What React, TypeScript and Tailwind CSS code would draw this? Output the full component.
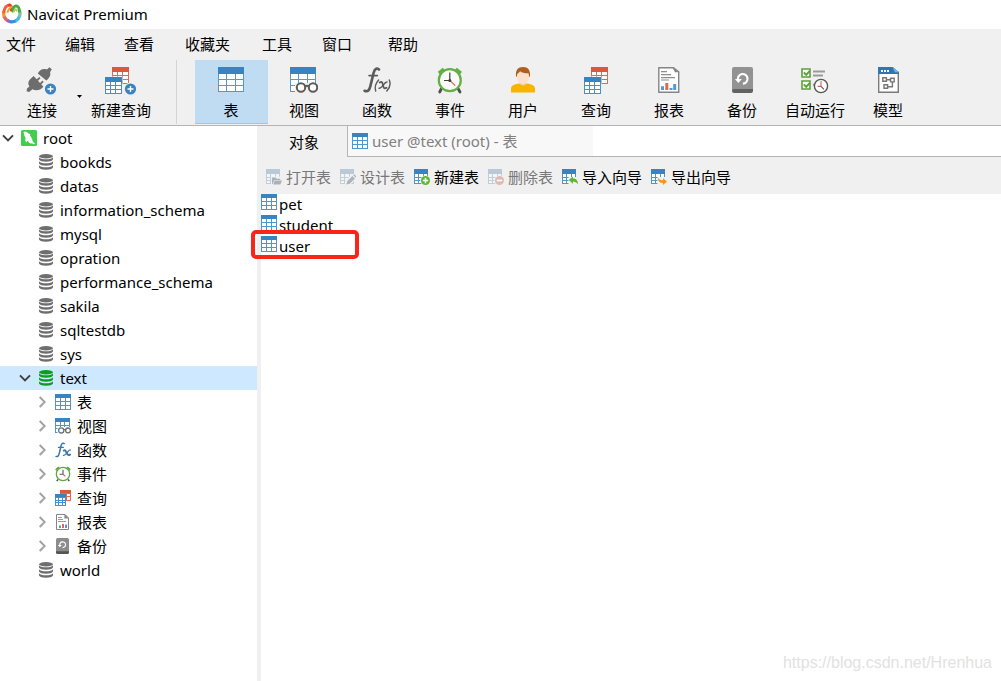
import type { ReactNode } from "react";

function Svg({ w, h, children }: { w: number; h: number; children: ReactNode }) {
  return (
    <svg width={w} height={h} viewBox={`0 0 ${w} ${h}`} fill="none" className="shrink-0" aria-hidden="true">
      {children}
    </svg>
  );
}

/* ---------- shared shapes ---------- */

function GridLarge() {
  return (
    <g shapeRendering="crispEdges">
      <rect x="0" y="1" width="26" height="24" fill="#4b9cd9" />
      <rect x="0" y="0" width="26" height="7" fill="#3883c1" />
      {[7, 13, 19].map((y) =>
        [1, 9, 18].map((x, i) => (
          <rect key={`${x}-${y}`} x={x} y={y} width={i === 1 ? 8 : 7} height={5} fill="#ffffff" />
        )),
      )}
    </g>
  );
}

function MiniGrid({ x = 0, y = 0, head = "#3883c1", line = "#3f92d3" }) {
  return (
    <g transform={`translate(${x} ${y})`} shapeRendering="crispEdges">
      <rect width="17" height="17" fill={line} />
      <rect width="17" height="5" fill={head} />
      {[5, 9, 13].map((r) =>
        [1, 6, 11].map((c, i) => (
          <rect key={`${c}-${r}`} x={c} y={r} width={i === 2 ? 5 : 4} height={3} fill="#ffffff" />
        )),
      )}
    </g>
  );
}

function SmallGrid() {
  return (
    <g shapeRendering="crispEdges">
      <rect width="16" height="16" fill="#4a97d2" />
      <rect width="16" height="4" fill="#3883c1" />
      {[4, 8, 12].map((r) =>
        [1, 6, 11].map((c) => <rect key={`${c}-${r}`} x={c} y={r} width={4} height={3} fill="#ffffff" />),
      )}
    </g>
  );
}

function ToolGrid({ faded = false }: { faded?: boolean }) {
  const line = faded ? "#c0ced9" : "#4a97d2";
  return (
    <g shapeRendering="crispEdges">
      <rect width="14" height="15" fill={line} />
      <rect width="14" height="5" fill={faded ? "#b9c9d5" : "#3883c1"} />
      {[5, 9, 12].map((r) =>
        [1, 5, 10].map((c, i) => (
          <rect key={`${c}-${r}`} x={c} y={r} width={i === 1 ? 4 : 3} height={r === 5 ? 3 : 2} fill={faded ? "#f5f5f5" : "#ffffff"} />
        )),
      )}
    </g>
  );
}

function PlusBadge({ x, y }: { x: number; y: number }) {
  return (
    <g>
      <circle cx={x} cy={y} r="5.6" fill="#3883c1" />
      <path d={`M${x - 3} ${y}h6M${x} ${y - 3}v6`} stroke="#fff" strokeWidth="1.4" />
    </g>
  );
}

/* ---------- application logo ---------- */

function Logo() {
  return (
    <Svg w={20} h={21}>
      <path d="M2 8.500A8.400 8.400 0 0 0 2.600 14.400" stroke="#f59a3a" strokeWidth="3.400" />
      <path d="M2.200 13.600A8.300 8.300 0 0 0 6 17.900" stroke="#dd6a6a" strokeWidth="3.400" />
      <path d="M5.300 17.400A8.400 8.400 0 0 0 9 18.800" stroke="#7d6fd0" strokeWidth="3.200" />
      <path d="M8.400 18.700A8.400 8.400 0 0 0 14.200 17.600" stroke="#2f8ee8" strokeWidth="3.200" />
      <path d="M13.600 18A8.400 8.400 0 0 0 17.600 13" stroke="#43bde4" strokeWidth="3.200" />
      <path d="M17.400 13.600A8.500 8.500 0 0 0 17.400 7.500" stroke="#7fc0a8" strokeWidth="3.400" />
      <path d="M1.800 9C2.400 4.800 4.800 2.200 7.800 2" stroke="#f0603c" strokeWidth="3" strokeLinecap="round" />
      <path d="M7.400 2C9.600 2.200 10.200 4.400 9.200 7.200" stroke="#e8392c" strokeWidth="2.600" strokeLinecap="round" />
      <path d="M5.600 8.800C6.600 6.200 8 4.600 9.800 3.600" stroke="#f2a02e" strokeWidth="2.200" strokeLinecap="round" />
      <path d="M10.600 8C11.200 4.600 12.400 2.600 14.200 2.800C16.600 3.400 17.400 5.400 17.500 8.400" stroke="#3fae49" strokeWidth="2.800" strokeLinecap="round" />
      <path d="M11.800 8.400C12.600 6.400 13.600 6 14.800 7.600" stroke="#b4cc3a" strokeWidth="2" strokeLinecap="round" />
    </Svg>
  );
}

/* ---------- main toolbar icons ---------- */

function ConnectIcon() {
  return (
    <Svg w={32} h={30}>
      <g fill="#6d6d6d">
        <path d="M23.4 .3L25.8 2.2L24.1 5.2C25 8.6 23.2 11.4 20.3 13.4L11.8 6.4C13.4 3 16.6 1 20.9 2.4Z" />
        <path d="M4.1 12.2L7.6 8.9L10.7 12.3L13.3 9.9L14.5 11.3L12 13.8L14 15.9L16.5 13.5L17.7 14.9L15.3 17.3L17.4 19.7C14.6 23 10.4 24.4 6.4 22.3L3.2 24.9L.6 24.3L1 21.5L3.4 19.4C1.7 16.9 2 14.3 4.1 12.2Z" />
      </g>
      <PlusBadge x={24.5} y={22} />
    </Svg>
  );
}

function NewQueryIcon() {
  return (
    <Svg w={32} h={30}>
      <MiniGrid x={7} y={0} head="#d9593c" line="#e0694e" />
      <path d="M-.5 9.5h18v18h-18z" fill="#f0f0f0" />
      <MiniGrid x={0} y={10} />
      <circle cx="25.5" cy="22" r="6.4" fill="#f0f0f0" />
      <PlusBadge x={25.5} y={22} />
    </Svg>
  );
}

function TableIcon() {
  return (
    <Svg w={26} h={28}>
      <GridLarge />
    </Svg>
  );
}

function ViewIcon() {
  return (
    <Svg w={28} h={28}>
      <GridLarge />
      <path d="M5 16h23v9H5z" fill="#f0f0f0" />
      <g stroke="#5b5b5b" strokeWidth="2">
        <circle cx="11" cy="20.5" r="4.2" fill="#fff" />
        <circle cx="23" cy="20.5" r="4.2" fill="#fff" />
        <path d="M15 19.6Q17 18 19 19.6" />
      </g>
    </Svg>
  );
}

function FunctionIcon() {
  return (
    <Svg w={30} h={28}>
      <g stroke="#5a5a5a" strokeLinecap="round">
        <path d="M17 2.5C15.6 .7 12.8 1.2 11.6 5.8L8.3 19.4C7.4 23 5.8 25.3 2.6 23.8" strokeWidth="2.6" />
        <path d="M7 8.6h8.4" strokeWidth="1.6" />
        <path d="M16.6 13C13.6 16.4 12.4 20 13.7 24" strokeWidth="1.4" />
        <path d="M27.3 13C29 17 27.7 20.8 24.8 24" strokeWidth="1.4" />
        <path d="M17.7 15.5C20 13.8 20.6 16 21 18C21.5 20.5 22 22.5 24.5 20.8" strokeWidth="1.8" />
        <path d="M25 15C22 14.8 20.2 21.8 17 21.3" strokeWidth="1.4" />
      </g>
    </Svg>
  );
}

function EventIcon() {
  return (
    <Svg w={26} h={28}>
      <path d="M4.5 21.5L2.7 25M21 21.5L23 25" stroke="#4f4f4f" strokeWidth="2.8" strokeLinecap="round" />
      <path d="M.8 4.8L5.8 .8L8 3.2L2.8 7.8ZM24.9 4.8L19.8 .8L17.6 3.2L22.9 7.8Z" fill="#62b044" />
      <circle cx="12.8" cy="13.2" r="11" fill="#fbfbfb" stroke="#62b044" strokeWidth="2.2" />
      <path d="M12.8 5.5v8H7" stroke="#3f3f3f" strokeWidth="1.2" />
      <path d="M12.8 13.4l5.4 5.2" stroke="#e65a43" strokeWidth="1.2" />
      <circle cx="12.8" cy="13.4" r="1.5" fill="#3f3f3f" />
    </Svg>
  );
}

function UserIcon() {
  return (
    <Svg w={24} h={28}>
      <path d="M8.8 14h6.6v4l-3.3 2.2L8.8 18Z" fill="#f4cfae" />
      <path d="M0 25.5V22C0 18.6 2.6 17.4 8.4 16.6Q12 20.4 15.8 16.6C21.5 17.4 24 18.6 24 22V25.5Z" fill="#f7b500" />
      <path d="M5.8 5.5Q5.8 2 12 2T18.3 5.5V9.5C18.3 13.5 15 17 12 17S5.8 13.5 5.8 9.5Z" fill="#fce0ca" />
      <path d="M5 9.2C4.3 3.2 7 0 12 0S19.6 3.2 19 9.2L18.2 10L17.5 6.2C14.5 6.4 11.5 5.8 9 4.2C8 5.6 7 6.5 6.2 7L5.8 10Z" fill="#ae5e20" />
    </Svg>
  );
}

function QueryIcon() {
  return (
    <Svg w={24} h={28}>
      <MiniGrid x={7} y={0} head="#d9593c" line="#e0694e" />
      <path d="M-.5 9.5h18v18h-18z" fill="#f0f0f0" />
      <MiniGrid x={0} y={10} />
    </Svg>
  );
}

function ReportIcon() {
  return (
    <Svg w={22} h={28}>
      <path d="M.8 .8H15.5L20.7 4.8V25.2H.8Z" fill="#fff" stroke="#858585" strokeWidth="1.4" />
      <path d="M14.3 .3L21.3 5.2H17Z" fill="#858585" />
      <path d="M3 4.6h6M3 7.6h10M3 10.6h14M3 13h8" stroke="#8d8d8d" strokeWidth="1.1" />
      <path d="M3 19.2h3V23H3zM11.5 21h3v2h-3zM15.2 17h3v6h-3z" fill="#4b9cdf" />
      <path d="M7.3 16h3v7h-3z" fill="#e8654a" />
    </Svg>
  );
}

function BackupIcon() {
  return (
    <Svg w={21} h={28}>
      <path d="M0 22h21v2q0 2-2 2H2q-2 0-2-2Z" fill="#626262" />
      <path d="M0 2Q0 0 2 0H19Q21 0 21 2V22H2Q0 22 0 24Z" fill="#929292" />
      <path d="M6.1 13.1A4.8 4.8 0 1 1 10.9 16.6" stroke="#fff" strokeWidth="2.2" />
      <path d="M2.9 12h7L6.3 16Z" fill="#fff" />
    </Svg>
  );
}

function AutoIcon() {
  return (
    <Svg w={28} h={28}>
      <path d="M1 2h8v8H1zM1 14h8v8H1z" fill="#fff" stroke="#5f9f3d" strokeWidth="1.6" />
      <path d="M2.8 5.4l2.4 2.5 3.6-4M2.8 17.4l2.4 2.5 3.6-4" stroke="#56a436" strokeWidth="2" />
      <path d="M12 4.4h12M12 8.4h10" stroke="#9a9a9a" strokeWidth="2" />
      <path d="M12 17.8h2" stroke="#9a9a9a" strokeWidth="2" />
      <circle cx="20" cy="19" r="6.6" fill="#fff" stroke="#585858" strokeWidth="1.4" />
      <path d="M20 14v5.4M20 19.4h-3.4" stroke="#d3624f" strokeWidth="1.1" />
      <path d="M20 19.4l3 3" stroke="#585858" strokeWidth="1.1" />
    </Svg>
  );
}

function ModelIcon() {
  return (
    <Svg w={21} h={28}>
      <path d="M.7 1h19.6v24.3H.7Z" fill="#fff" stroke="#7b7b7b" strokeWidth="1.4" />
      <path d="M0 0H14.5L21 5V7H0Z" fill="#2e77b3" />
      <path d="M15 0H21V5Z" fill="#f0f0f0" />
      <path d="M14.3 0L21 5.3H17Z" fill="#6fb3e6" />
      <path d="M3 3h2v2H3zM6 3h2v2H6zM9 3h2v2H9z" fill="#fff" />
      <g stroke="#777" strokeWidth="1.4">
        <path d="M4.8 10.7h3.6v3.6H4.8zM12.6 11.3h3.6v3.6h-3.6zM6 17.7h3.6v3.6H6z" />
        <path d="M8.4 12.8h4.2M14.4 15v4.7H9.6" />
      </g>
    </Svg>
  );
}

/* ---------- tree icons ---------- */

function Chevron({ open = false }: { open?: boolean }) {
  return open ? (
    <Svg w={12} h={12}>
      <path d="M1 3.4L6 8.4L11 3.4" stroke="#404040" strokeWidth="2" />
    </Svg>
  ) : (
    <Svg w={8} h={12}>
      <path d="M1.7 1L6.7 6L1.7 11" stroke="#a2a2a2" strokeWidth="2" />
    </Svg>
  );
}

function MysqlIcon() {
  return (
    <Svg w={16} h={16}>
      <rect width="16" height="16" rx="1.5" fill="#3fd04b" />
      <path d="M2.600 1.800C4.600 1.400 6.400 2 7.600 3.600L9.400 4.200L9 5.600C10.600 7.400 11.400 9.400 11.800 11.800L14 13.400L13 14.200L10.400 13.200C9.400 14 7.800 13 7 10.800L6 11.400L5.200 12.400L4.200 10.600L4.600 8C3.400 6 2.800 4 2.600 1.800Z" fill="#fff" />
    </Svg>
  );
}

function DatabaseIcon({ active = false }: { active?: boolean }) {
  const fill = active ? "#0d9d1e" : "#6e6e6e";
  return (
    <Svg w={14} h={16}>
      <ellipse cx="7" cy="2.3" rx="7" ry="2.2" fill={fill} />
      {[3.2, 7.2, 11.2].map((y) => (
        <path key={y} d={`M0 ${y}Q1.5 ${y + 2.1} 7 ${y + 2.1}T14 ${y}V${y + 2.4}Q12.6 ${y + 4.6} 7 ${y + 4.6}T0 ${y + 2.4}Z`} fill={fill} />
      ))}
    </Svg>
  );
}

function SmallTableIcon() {
  return (
    <Svg w={16} h={16}>
      <SmallGrid />
    </Svg>
  );
}

function SmallViewIcon() {
  return (
    <Svg w={16} h={16}>
      <g transform="scale(.9375)">
        <SmallGrid />
      </g>
      <path d="M2.5 9H16v7H2.5z" fill="#fff" />
      <g stroke="#707070" strokeWidth="1.3">
        <circle cx="6.2" cy="12.4" r="2.6" />
        <circle cx="13" cy="12.4" r="2.4" />
        <path d="M8.6 11.6h2" />
      </g>
    </Svg>
  );
}

function SmallFunctionIcon() {
  return (
    <Svg w={17} h={16}>
      <g stroke="#3a76a8" strokeLinecap="round">
        <path d="M9.2 1.6C8 .6 6.6 1.4 6 4L4.2 11.6C3.6 14 2.6 15 1 14.4" strokeWidth="1.5" />
        <path d="M3.4 5.4h5" strokeWidth="1.1" />
        <path d="M8.8 8.6C11.6 6.6 11.2 14.8 15 12.6" strokeWidth="1.9" />
        <path d="M15.4 8C12.8 7.4 11.4 14 8.4 13.4" strokeWidth="1.2" />
      </g>
    </Svg>
  );
}

function SmallEventIcon() {
  return (
    <Svg w={16} h={16}>
      <path d="M3 13.3L1.8 15.2M13 13.3L14.2 15.2" stroke="#4f4f4f" strokeWidth="1.5" />
      <path d="M.2 3.2L3.2 .4L4.8 1.8L1.4 5ZM15.8 3.2L12.8 .4L11.2 1.8L14.6 5Z" fill="#62a844" />
      <circle cx="8" cy="8" r="6.7" fill="#fff" stroke="#62a844" strokeWidth="1.3" />
      <path d="M8 3.8V8.2H4.6" stroke="#555" strokeWidth="1.1" />
      <path d="M8 8.2l2.4 2.2" stroke="#e65a43" strokeWidth="1.1" />
    </Svg>
  );
}

function SmallQueryIcon() {
  return (
    <Svg w={16} h={16}>
      <g shapeRendering="crispEdges">
        <path d="M5 0h11v11H5z" fill="#e0694e" />
        <path d="M5 0h11v3H5z" fill="#d9593c" />
        <path d="M12 4h3v2h-3zM12 7h3v3h-3z" fill="#fff" />
        <path d="M0 4h11v12H0z" fill="#3f92d3" />
        <path d="M0 4h11v3H0z" fill="#3883c1" />
        <path d="M1 8h2v2H1zM4 8h3v2H4zM8 8h2v2H8zM1 11h2v1H1zM4 11h3v1H4zM8 11h2v1H8zM1 13h2v2H1zM4 13h3v2H4zM8 13h2v2H8z" fill="#fff" />
      </g>
    </Svg>
  );
}

function SmallReportIcon() {
  return (
    <Svg w={16} h={16}>
      <path d="M1.5 .5H10L13.5 4V15.5H1.5Z" fill="#fff" stroke="#858585" />
      <path d="M9.4 0L14 4.4H9.4Z" fill="#858585" />
      <path d="M3 3.5h4M3 5.5h5M3 7.5h8" stroke="#9a9a9a" />
      <path d="M4 11.5h2V14H4zM10 10.5h2V14h-2z" fill="#4b9cdf" />
      <path d="M7 10h2v4H7z" fill="#e8654a" />
    </Svg>
  );
}

function SmallBackupIcon() {
  return (
    <Svg w={16} h={16}>
      <path d="M1 12.5h13v2q0 1.5-1.5 1.5h-10Q1 16 1 14.5Z" fill="#555" />
      <path d="M1 1.5Q1 0 2.5 0h10Q14 0 14 1.5v11.7H1Z" fill="#8c8c8c" />
      <path d="M4.9 7.6A2.9 2.9 0 1 1 7.6 9.6" stroke="#fff" strokeWidth="1.2" />
      <path d="M2.8 7h4L4.9 9.3Z" fill="#fff" />
    </Svg>
  );
}

/* ---------- object toolbar icons ---------- */

function OpenTableIcon() {
  return (
    <Svg w={16} h={16}>
      <ToolGrid faded />
      <path d="M5 7.5H16V16H5z" fill="#f0f0f0" />
      <path d="M6 15V8.5h3.5l1 1.2h3.7V11H8.4L6.6 15Z" fill="#a9b2b9" />
      <path d="M8.8 11.6H16L14.4 15.4H7.2Z" fill="#a9b2b9" />
    </Svg>
  );
}

function DesignTableIcon() {
  return (
    <Svg w={16} h={16}>
      <ToolGrid faded />
      <path d="M5 16V12L12 5h4v5l-6 6Z" fill="#f0f0f0" />
      <path d="M6.4 15.6l.8-3.4L12.4 7l2.6 2.6-5.2 5.2ZM13.2 6.2l1-.9 2 2-.6 1.2Z" fill="#a9b5bf" />
    </Svg>
  );
}

function BadgeTableIcon({ kind }: { kind: "add" | "remove" }) {
  const add = kind === "add";
  return (
    <Svg w={16} h={16}>
      <ToolGrid faded={!add} />
      <circle cx="11.5" cy="11.5" r="5.2" fill="#f0f0f0" />
      <circle cx="11.5" cy="11.5" r="4.5" fill={add ? "#5bb52f" : "#e0b9b6"} />
      <path d={add ? "M8.8 11.5h5.4M11.5 8.8v5.4" : "M8.8 11.5h5.4"} stroke="#fff" strokeWidth="1.6" />
    </Svg>
  );
}

function WizardIcon({ kind }: { kind: "import" | "export" }) {
  return (
    <Svg w={16} h={16}>
      <ToolGrid />
      <path d="M6.5 8H16v8H6.5z" fill="#f0f0f0" />
      {kind === "import" ? (
        <path d="M6.8 11L11 7.4v2.2c3.2 0 5 2 5 6C14.6 13.4 13.2 12.6 11 12.6v2.2Z" fill="#5cb52e" />
      ) : (
        <path d="M16 12.6L12 16v-2c-3.2 0-5-1.8-5.4-5.6C8.2 10.6 9.8 11.2 12 11.2V9.2Z" fill="#f6960c" />
      )}
    </Svg>
  );
}

/* ---------- page data ---------- */

const menus = ["文件", "编辑", "查看", "收藏夹", "工具", "窗口", "帮助"];

const tools: { label: string; icon: ReactNode; active?: boolean }[] = [
  { label: "表", icon: <TableIcon />, active: true },
  { label: "视图", icon: <ViewIcon /> },
  { label: "函数", icon: <FunctionIcon /> },
  { label: "事件", icon: <EventIcon /> },
  { label: "用户", icon: <UserIcon /> },
  { label: "查询", icon: <QueryIcon /> },
  { label: "报表", icon: <ReportIcon /> },
  { label: "备份", icon: <BackupIcon /> },
  { label: "自动运行", icon: <AutoIcon /> },
  { label: "模型", icon: <ModelIcon /> },
];

const databases = [
  "bookds",
  "datas",
  "information_schema",
  "mysql",
  "opration",
  "performance_schema",
  "sakila",
  "sqltestdb",
  "sys",
];

const groups: { label: string; icon: ReactNode }[] = [
  { label: "表", icon: <SmallTableIcon /> },
  { label: "视图", icon: <SmallViewIcon /> },
  { label: "函数", icon: <SmallFunctionIcon /> },
  { label: "事件", icon: <SmallEventIcon /> },
  { label: "查询", icon: <SmallQueryIcon /> },
  { label: "报表", icon: <SmallReportIcon /> },
  { label: "备份", icon: <SmallBackupIcon /> },
];

const actions: { label: string; icon: ReactNode; disabled?: boolean }[] = [
  { label: "打开表", icon: <OpenTableIcon />, disabled: true },
  { label: "设计表", icon: <DesignTableIcon />, disabled: true },
  { label: "新建表", icon: <BadgeTableIcon kind="add" /> },
  { label: "删除表", icon: <BadgeTableIcon kind="remove" />, disabled: true },
  { label: "导入向导", icon: <WizardIcon kind="import" /> },
  { label: "导出向导", icon: <WizardIcon kind="export" /> },
];

/* ---------- page parts ---------- */

function ToolButton({ label, icon, active = false }: { label: string; icon: ReactNode; active?: boolean }) {
  return (
    <button
      type="button"
      className={`flex h-16 w-[73px] shrink-0 flex-col items-center gap-1 whitespace-nowrap border-b pr-px pt-[7px] ${
        active ? "border-[#91c9f7] bg-[#c0dcf3]" : "border-transparent"
      }`}
    >
      <span className="flex h-7 items-start">{icon}</span>
      <span className="leading-[22px]">{label}</span>
    </button>
  );
}

function DatabaseRow({ name }: { name: string }) {
  return (
    <li>
      <button type="button" className="flex h-6 w-full items-center gap-[7px] pl-[39px]">
        <DatabaseIcon />
        <span>{name}</span>
      </button>
    </li>
  );
}

export default function App() {
  return (
    <div className="relative flex min-h-screen flex-col bg-white font-['Noto_Sans','Noto_Sans_CJK_SC',sans-serif] text-[15px] leading-6 text-black">
      <header className="flex h-[29px] items-start gap-[5px] pl-[2px] pt-[3px]">
        <Logo />
        <h1 className="leading-[22px]">Navicat Premium</h1>
      </header>

      <div className="border-b border-[#b4b4b4] bg-[#f0f0f0]">
        <nav className="grid h-[31px] grid-cols-[59px_59px_61px_77px_60px_66px_auto] items-start justify-start pl-[6px] pt-[3px]">
          {menus.map((m) => (
            <button key={m} type="button" className="text-left">
              {m}
            </button>
          ))}
        </nav>
        <div className="flex h-[65px] items-start overflow-hidden">
          <div className="flex w-[177px] shrink-0 border-r border-[#d4d4d4] pl-[6px]">
            <ToolButton label="连接" icon={<ConnectIcon />} />
            <div className="flex">
              <button type="button" aria-label="连接选项" className="-ml-[2px] mt-8 h-2 w-[8px] shrink-0">
                <svg width="5" height="3" viewBox="0 0 5 3" aria-hidden="true">
                  <path d="M0 0h5L2.5 3Z" fill="#000" />
                </svg>
              </button>
              <ToolButton label="新建查询" icon={<NewQueryIcon />} />
            </div>
          </div>
          <div className="flex pl-[18px]">
            {tools.map((t) => (
              <ToolButton key={t.label} {...t} />
            ))}
          </div>
        </div>
      </div>

      <div className="flex flex-1">
        <aside className="w-[257px] shrink-0">
          <button type="button" className="flex h-6 w-full items-center pl-[2px]">
            <Chevron open />
            <span className="ml-[7px] flex items-center gap-[6px]">
              <MysqlIcon />
              <span>root</span>
            </span>
          </button>
          <ul>
            {databases.map((d) => (
              <DatabaseRow key={d} name={d} />
            ))}
            <li>
              <button type="button" className="flex h-6 w-full items-center gap-[7px] bg-[#cde8ff] pl-[19px]">
                <span className="flex items-center gap-2">
                  <Chevron open />
                  <DatabaseIcon active />
                </span>
                <span>text</span>
              </button>
              <ul>
                {groups.map((g) => (
                  <li key={g.label}>
                    <button type="button" className="flex h-6 w-full items-center gap-[6px] pl-[38px]">
                      <span className="flex w-[33px] items-center gap-[9px]">
                        <Chevron />
                        {g.icon}
                      </span>
                      <span>{g.label}</span>
                    </button>
                  </li>
                ))}
              </ul>
            </li>
            <DatabaseRow name="world" />
          </ul>
        </aside>

        <main className="flex min-w-0 flex-1 flex-col">
          <div role="tablist" className="flex h-[31px]">
            <button type="button" role="tab" aria-selected="true" className="w-[90px] shrink-0 bg-[#f0f0f0] pl-1 text-center">
              对象
            </button>
            <div className="flex flex-1 border-b border-l border-[#b4b4b4]">
              <button type="button" role="tab" aria-selected="false" className="flex w-[245px] items-center gap-1 bg-[#f8f8f8] pl-1 text-[#808080]">
                <SmallTableIcon />
                <span className="whitespace-nowrap">user @text (root) - 表</span>
              </button>
            </div>
          </div>

          <div className="flex h-[37px] items-start gap-[9px] bg-[#f0f0f0] pl-[9px] pt-[9px]">
            {actions.map((a) => (
              <button
                key={a.label}
                type="button"
                disabled={a.disabled}
                className={`flex shrink-0 items-start gap-1 whitespace-nowrap leading-[22px] ${a.disabled ? "text-[#787878]" : "text-black"}`}
              >
                <span className="pt-[3px]">{a.icon}</span>
                <span>{a.label}</span>
              </button>
            ))}
          </div>

          <div className="flex-1 border-l-4 border-[#f0f0f0]">
            <ul>
              {["pet", "student", "user"].map((name) => (
                <li key={name} className="relative">
                  <button type="button" className="flex h-[21px] items-start gap-[2px]">
                    <SmallTableIcon />
                    <span className="leading-[21px]">{name}</span>
                  </button>
                  {name === "user" && (
                    <span className="pointer-events-none absolute -left-[10px] -top-[6px] h-[29px] w-[108px] rounded-[5px] border-4 border-[#fb2418]" />
                  )}
                </li>
              ))}
            </ul>
          </div>
        </main>
      </div>

      <a
        href="https://blog.csdn.net/Hrenhua"
        className="absolute bottom-[6px] right-[9px] font-['Liberation_Sans',sans-serif] text-[16px] text-[#e2e2e2]"
      >
        https://blog.csdn.net/Hrenhua
      </a>
    </div>
  );
}
